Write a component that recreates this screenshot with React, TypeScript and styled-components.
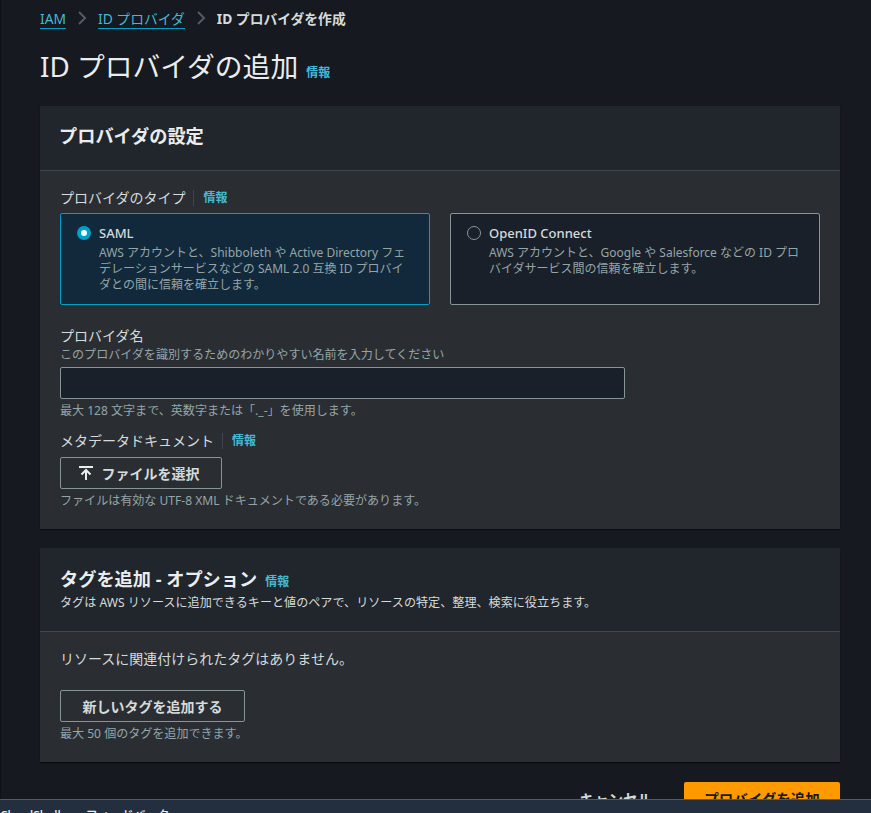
import React from 'react'
import styled, { createGlobalStyle } from 'styled-components'

const GlobalStyle = createGlobalStyle`
    html, body {
        margin: 0;
        height: 813px;
        overflow: hidden;
        background: #16191f;
    }
    * {
        box-sizing: border-box;
    }
    body {
        font-family: "Noto Sans", "Noto Sans CJK JP", sans-serif;
        color: #d5dbdb;
        font-size: 12px;
    }
`

const Chevron = () => (
    <svg width="16" height="16" viewBox="0 0 16 16" fill="none" stroke="#545b64" strokeWidth="2">
        <path d="M5 2l6 6-6 6" />
    </svg>
)

const UploadIcon = () => (
    <svg width="16" height="16" viewBox="0 0 16 16" fill="none" stroke="#eaeded" strokeWidth="2">
        <path d="M1 2h14M8 15V5M3.500 9.500L8 5l4.500 4.500" />
    </svg>
)

export default function App() {
    return (
        <Page>
            <GlobalStyle />
            <Breadcrumbs>
                <Crumb>IAM</Crumb>
                <Chevron />
                <Crumb>ID プロバイダ</Crumb>
                <Chevron />
                <CurrentCrumb>ID プロバイダを作成</CurrentCrumb>
            </Breadcrumbs>
            <TitleRow>
                <Title>ID プロバイダの追加</Title>
                <Info>情報</Info>
            </TitleRow>

            <Panel>
                <PanelHeader>
                    <PanelTitle>プロバイダの設定</PanelTitle>
                </PanelHeader>
                <SettingsBody>
                    <LabelRow>
                        <Label>プロバイダのタイプ</Label>
                        <LabelInfo>情報</LabelInfo>
                    </LabelRow>
                    <Tiles>
                        <Tile $selected>
                            <Radio $selected />
                            <div>
                                <TileName>SAML</TileName>
                                <TileText>
                                    AWS アカウントと、Shibboleth や Active Directory フェデレーションサービスなどの SAML 2.0 互換 ID プロバイダとの間に信頼を確立します。
                                </TileText>
                            </div>
                        </Tile>
                        <Tile>
                            <Radio />
                            <div>
                                <TileName>OpenID Connect</TileName>
                                <TileText>
                                    AWS アカウントと、Google や Salesforce などの ID プロバイダサービス間の信頼を確立します。
                                </TileText>
                            </div>
                        </Tile>
                    </Tiles>

                    <NameField>
                        <NameLabel>プロバイダ名</NameLabel>
                        <Hint>このプロバイダを識別するためのわかりやすい名前を入力してください</Hint>
                        <TextInput />
                        <Hint>最大 128 文字まで、英数字または「._-」を使用します。</Hint>
                    </NameField>

                    <MetaField>
                        <LabelRow>
                            <Label>メタデータドキュメント</Label>
                            <LabelInfo>情報</LabelInfo>
                        </LabelRow>
                        <FileButton>
                            <UploadIcon />
                            ファイルを選択
                        </FileButton>
                        <Hint>ファイルは有効な UTF-8 XML ドキュメントである必要があります。</Hint>
                    </MetaField>
                </SettingsBody>
            </Panel>

            <TagPanel>
                <TagHeader>
                    <TagTitleRow>
                        <PanelTitle>タグを追加 - オプション</PanelTitle>
                        <Info>情報</Info>
                    </TagTitleRow>
                    <TagDescription>
                        タグは AWS リソースに追加できるキーと値のペアで、リソースの特定、整理、検索に役立ちます。
                    </TagDescription>
                </TagHeader>
                <TagBody>
                    <EmptyText>リソースに関連付けられたタグはありません。</EmptyText>
                    <TagButton>新しいタグを追加する</TagButton>
                    <Hint>最大 50 個のタグを追加できます。</Hint>
                </TagBody>
            </TagPanel>

            <Actions>
                <CancelButton>キャンセル</CancelButton>
                <PrimaryButton>プロバイダを追加</PrimaryButton>
            </Actions>

            <Footer>
                <span>CloudShell</span>
                <span>フィードバック</span>
            </Footer>
        </Page>
    )
}

const Page = styled.div`
    height: 813px;
    overflow: hidden;
    padding: 7px 31px 0 39px;
    border-left: 1px solid #0f1115;
`

const Breadcrumbs = styled.nav`
    display: flex;
    align-items: center;
    gap: 8px;
    height: 22px;
    font-size: 13.8px;
`

const Crumb = styled.a`
    color: #44b9d6;
    border-bottom: 1px solid #00a1c9;
    line-height: 18px;
    margin-top: 2px;
`

const CurrentCrumb = styled.span`
    color: #d5dbdb;
    font-weight: 700;
`

const TitleRow = styled.div`
    display: flex;
    align-items: baseline;
    gap: 8px;
    margin-top: 15px;
    height: 44px;
`

const Title = styled.h1`
    margin: 0;
    font-size: 27.8px;
    font-weight: 400;
    line-height: 44px;
    color: #eaeded;
`

const Info = styled.a`
    color: #44b9d6;
    font-size: 12px;
    font-weight: 700;
`

const Panel = styled.section`
    margin-top: 18px;
    background: #2a2e33;
    box-shadow: 0 1px 1px 0 rgba(0, 0, 0, 0.5);
    height: 423px;
`

const PanelHeader = styled.header`
    height: 65px;
    padding: 17px 20px 0 19px;
    background: #21252c;
    border-bottom: 1px solid #414750;
`

const PanelTitle = styled.h2`
    margin: 0;
    font-size: 18.2px;
    font-weight: 700;
    line-height: 26px;
    color: #eaeded;
`

const SettingsBody = styled.div`
    padding: 17px 20px 0;
`

const LabelRow = styled.div`
    display: flex;
    align-items: center;
    height: 20px;
`

const Label = styled.label`
    display: block;
    font-size: 14px;
    line-height: 20px;
    color: #d5dbdb;
`

const NameLabel = styled(Label)`
    margin-bottom: 1px;
`

const LabelInfo = styled(Info)`
    margin-left: 8px;
    padding-left: 9px;
    line-height: 16px;
    border-left: 1px solid #414750;
`

const Tiles = styled.div`
    display: grid;
    grid-template-columns: 370px 370px;
    gap: 20px;
    margin-top: 5px;
`

const Tile = styled.div<{ $selected?: boolean }>`
    display: flex;
    gap: 8px;
    height: 92px;
    padding: 10px 16px;
    border: 1px solid ${(props) => (props.$selected ? '#00a1c9' : '#879596')};
    border-radius: 2px;
    background: ${(props) => (props.$selected ? '#12293b' : '#1a2029')};
`

const Radio = styled.span<{ $selected?: boolean }>`
    flex: none;
    width: 14px;
    height: 14px;
    margin-top: 2px;
    border-radius: 50%;
    border: ${(props) => (props.$selected ? '4px solid #00a1c9' : '1px solid #879596')};
    background: ${(props) => (props.$selected ? '#fff' : 'transparent')};
`

const TileName = styled.div`
    font-size: 13px;
    line-height: 18px;
    margin-bottom: 3px;
    color: #d5dbdb;
    font-weight: 500;
`

const TileText = styled.div`
    font-size: 12px;
    line-height: 16px;
    color: #95a5a6;
`

const NameField = styled.div`
    margin-top: 21px;
`

const Hint = styled.div`
    font-size: 12.05px;
    line-height: 16px;
    color: #95a5a6;
`

const TextInput = styled.input`
    display: block;
    width: 565px;
    height: 32px;
    margin: 4px 0;
    background: #1a2029;
    border: 1px solid #879596;
    border-radius: 2px;
`

const MetaField = styled.div`
    margin-top: 12px;
`

const OutlineButton = styled.button`
    display: flex;
    align-items: center;
    justify-content: center;
    font-family: inherit;
    font-size: 14px;
    font-weight: 700;
    color: #d5dbdb;
    background: transparent;
    border: 1px solid #879596;
    border-radius: 2px;
    height: 32px;
`

const FileButton = styled(OutlineButton)`
    gap: 8px;
    width: 162px;
    margin: 6px 0 4px;
    padding: 0 10px 0 5px;
`

const TagPanel = styled.section`
    margin-top: 19px;
    height: 214px;
    background: #2a2e33;
    box-shadow: 0 1px 1px 0 rgba(0, 0, 0, 0.5);
`

const TagHeader = styled.header`
    height: 84px;
    padding: 18px 20px 0;
    background: #21252c;
    border-bottom: 1px solid #414750;
`

const TagTitleRow = styled.div`
    display: flex;
    align-items: baseline;
    gap: 8px;
`

const TagDescription = styled.div`
    margin-top: 3px;
    font-size: 12.1px;
    line-height: 16px;
    color: #d5dbdb;
`

const TagBody = styled.div`
    padding: 17px 20px 0;
`

const EmptyText = styled.div`
    font-size: 14px;
    line-height: 20px;
    color: #d5dbdb;
`

const TagButton = styled(OutlineButton)`
    width: 185px;
    margin: 21px 0 4px;
`

const Actions = styled.div`
    display: flex;
    justify-content: flex-end;
    align-items: center;
    gap: 32px;
    margin-top: 20px;
`

const CancelButton = styled.button`
    font-family: inherit;
    font-size: 14.5px;
    font-weight: 700;
    color: #d5dbdb;
    background: none;
    border: 0;
    padding: 0;
`

const PrimaryButton = styled.button`
    width: 156px;
    height: 32px;
    padding: 0;
    font-family: inherit;
    font-size: 14.5px;
    font-weight: 700;
    color: #16191f;
    background: #ff9900;
    border: 0;
    border-radius: 2px;
`

const Footer = styled.footer`
    position: fixed;
    left: 0;
    right: 0;
    top: 799px;
    height: 14px;
    overflow: hidden;
    display: flex;
    gap: 25px;
    padding: 7px 0 0 0;
    background: #232f3e;
    border-top: 1px solid #545b64;
    font-size: 12px;
    line-height: 18px;
    color: #eaeded;
    font-weight: 500;
`
